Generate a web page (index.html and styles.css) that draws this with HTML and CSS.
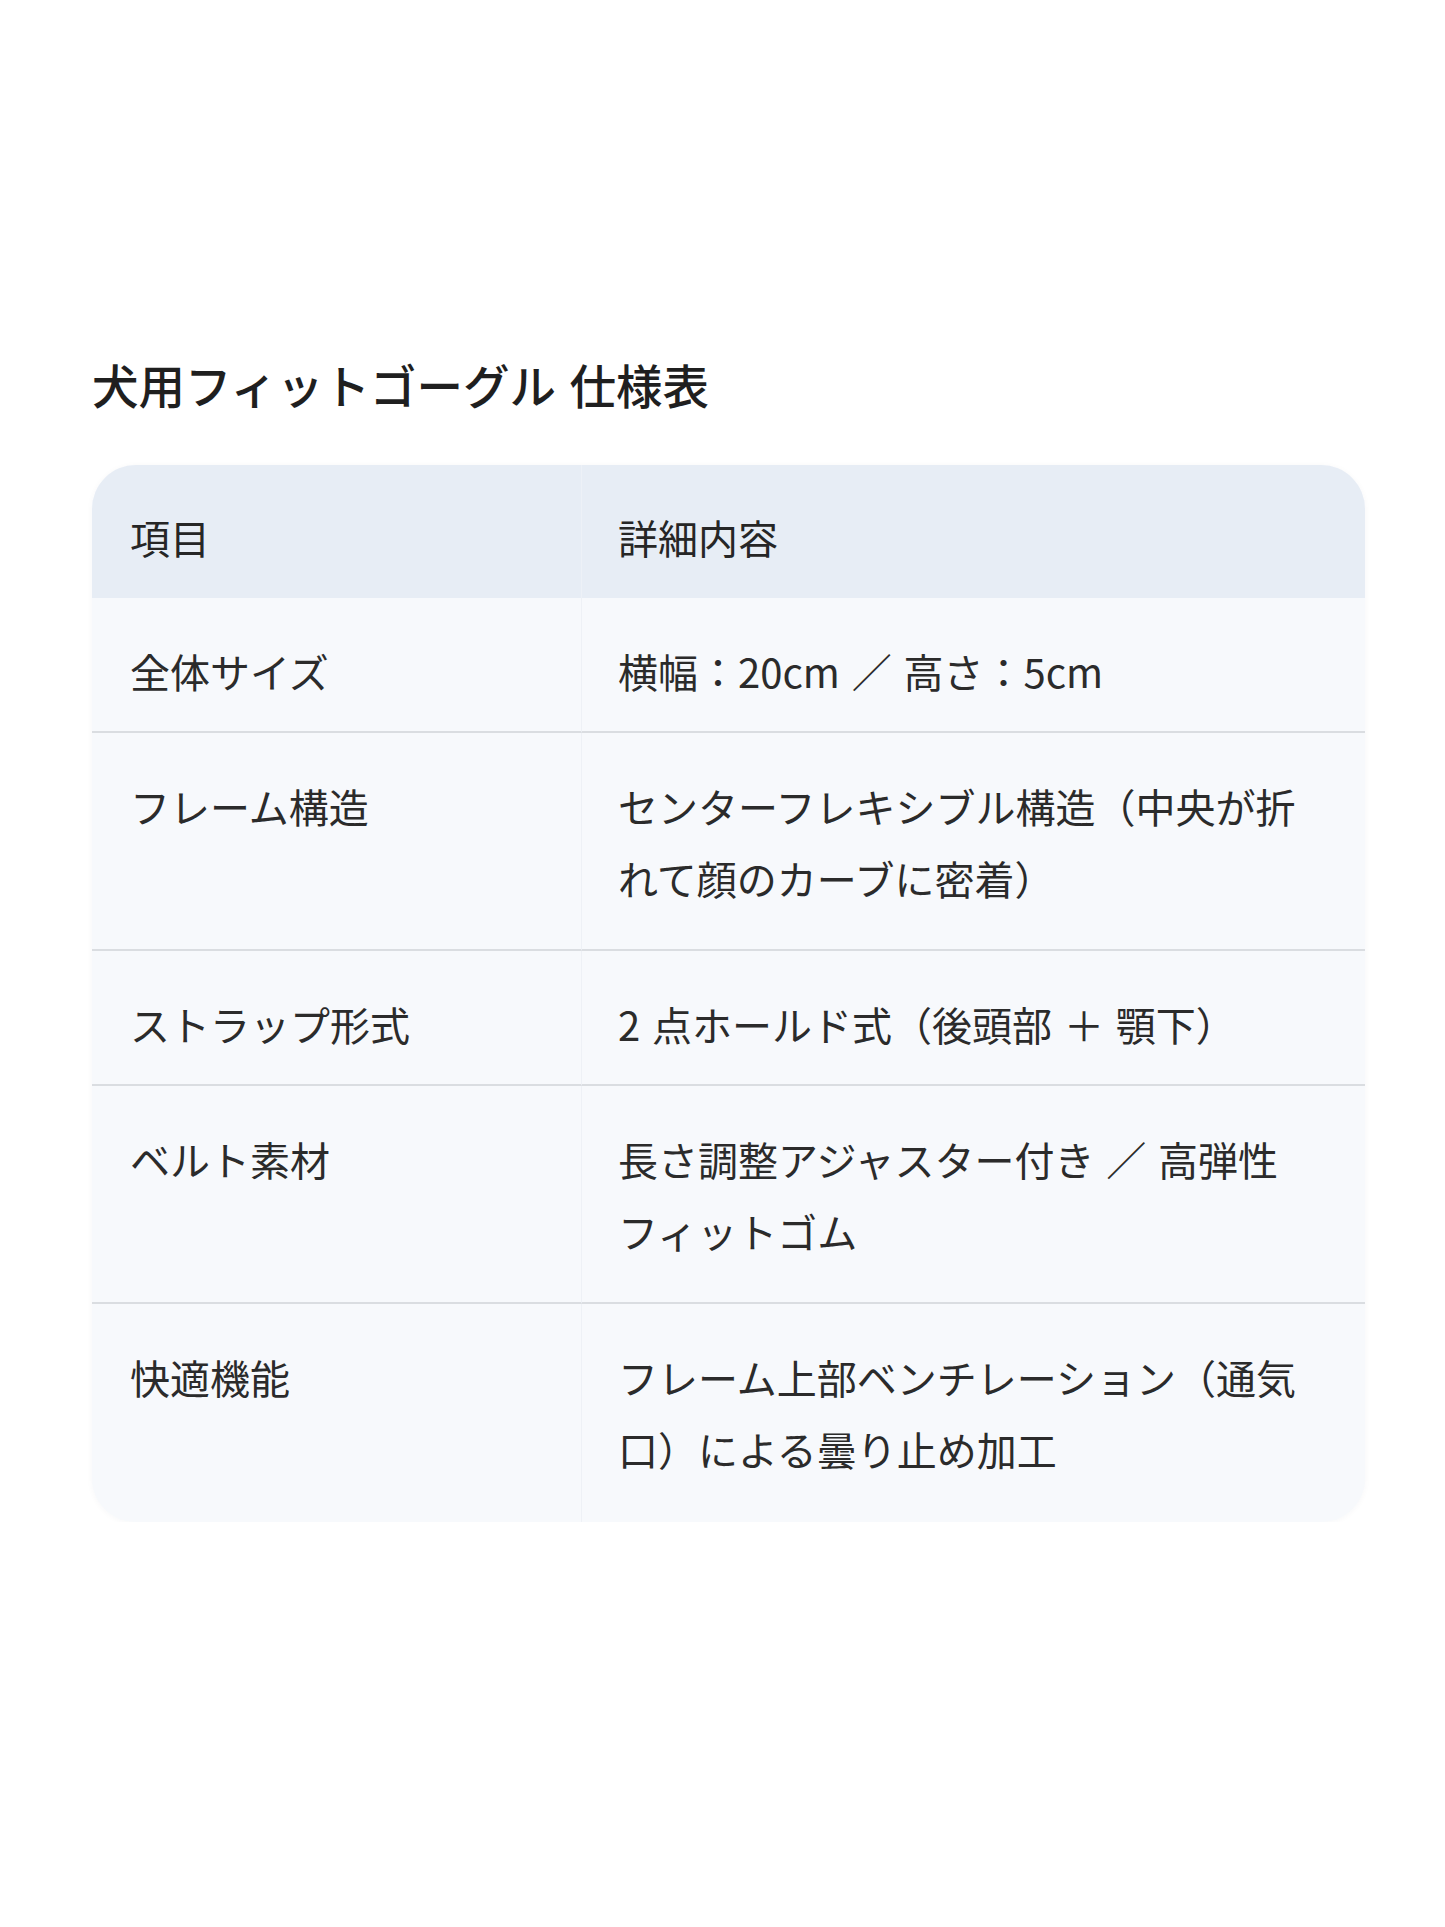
FILE: index.html
```html
<!DOCTYPE html>
<html lang="ja">
<head>
<meta charset="utf-8">
<title>犬用フィットゴーグル 仕様表</title>
<link rel="stylesheet" href="styles.css">
</head>
<body>
<main class="page">
  <h1 class="title">犬用フィットゴーグル 仕様表</h1>
  <div class="card">
    <table class="spec">
      <thead>
        <tr>
          <th class="col-key">項目</th>
          <th class="col-val">詳細内容</th>
        </tr>
      </thead>
      <tbody>
        <tr>
          <td class="col-key">全体サイズ</td>
          <td class="col-val">横幅：20cm ／ 高さ：5cm</td>
        </tr>
        <tr class="wrap">
          <td class="col-key">フレーム構造</td>
          <td class="col-val">センターフレキシブル構造（中央が折れて顔のカーブに密着）</td>
        </tr>
        <tr>
          <td class="col-key">ストラップ形式</td>
          <td class="col-val">2 点ホールド式（後頭部 ＋ 顎下）</td>
        </tr>
        <tr class="wrap">
          <td class="col-key">ベルト素材</td>
          <td class="col-val">長さ調整アジャスター付き ／ 高弾性フィットゴム</td>
        </tr>
        <tr class="wrap last">
          <td class="col-key">快適機能</td>
          <td class="col-val">フレーム上部ベンチレーション（通気口）による曇り止め加工</td>
        </tr>
      </tbody>
    </table>
  </div>
</main>
</body>
</html>
```

FILE: styles.css
```css
html, body {
  margin: 0;
  padding: 0;
  background: #ffffff;
}

body {
  font-family: "Noto Sans CJK JP", "Noto Sans", sans-serif;
  color: #2b2b2b;
  word-spacing: 0.18em;
}

.page {
  padding: 352px 0 0 92px;
  width: 1273px;
}

.title {
  margin: 0 0 49px 0;
  font-size: 46.5px;
  line-height: 64px;
  font-weight: 500;
  color: #1f1f1f;
  letter-spacing: 0;
}

.card {
  width: 1273px;
  border-radius: 44px;
  overflow: hidden;
  background: #f7f9fc;
  box-shadow: 0 1px 6px rgba(30, 50, 80, 0.04);
}

.spec {
  width: 100%;
  border-collapse: separate;
  border-spacing: 0;
  table-layout: fixed;
  font-size: 40px;
  line-height: 72px;
}

.spec th,
.spec td {
  box-sizing: border-box;
  text-align: left;
  vertical-align: top;
  font-weight: 400;
  padding: 37px 48px 24px 38px;
}

.spec .col-key {
  width: 490px;
  border-right: 1px solid #eef1f6;
}

.spec .col-val {
  padding-left: 36px;
}

.spec thead th {
  background: #e7edf5;
  padding-top: 36px;
  padding-bottom: 25px;
  color: #262626;
}

.spec thead th.col-key {
  border-right-color: #edf1f7;
}

.spec tbody td {
  background: #f7f9fc;
  border-bottom: 2px solid #dadde1;
}

.spec tbody tr.wrap td {
  padding-bottom: 35px;
}

.spec tbody tr.last td {
  border-bottom: none;
  padding-bottom: 37px;
}
```
